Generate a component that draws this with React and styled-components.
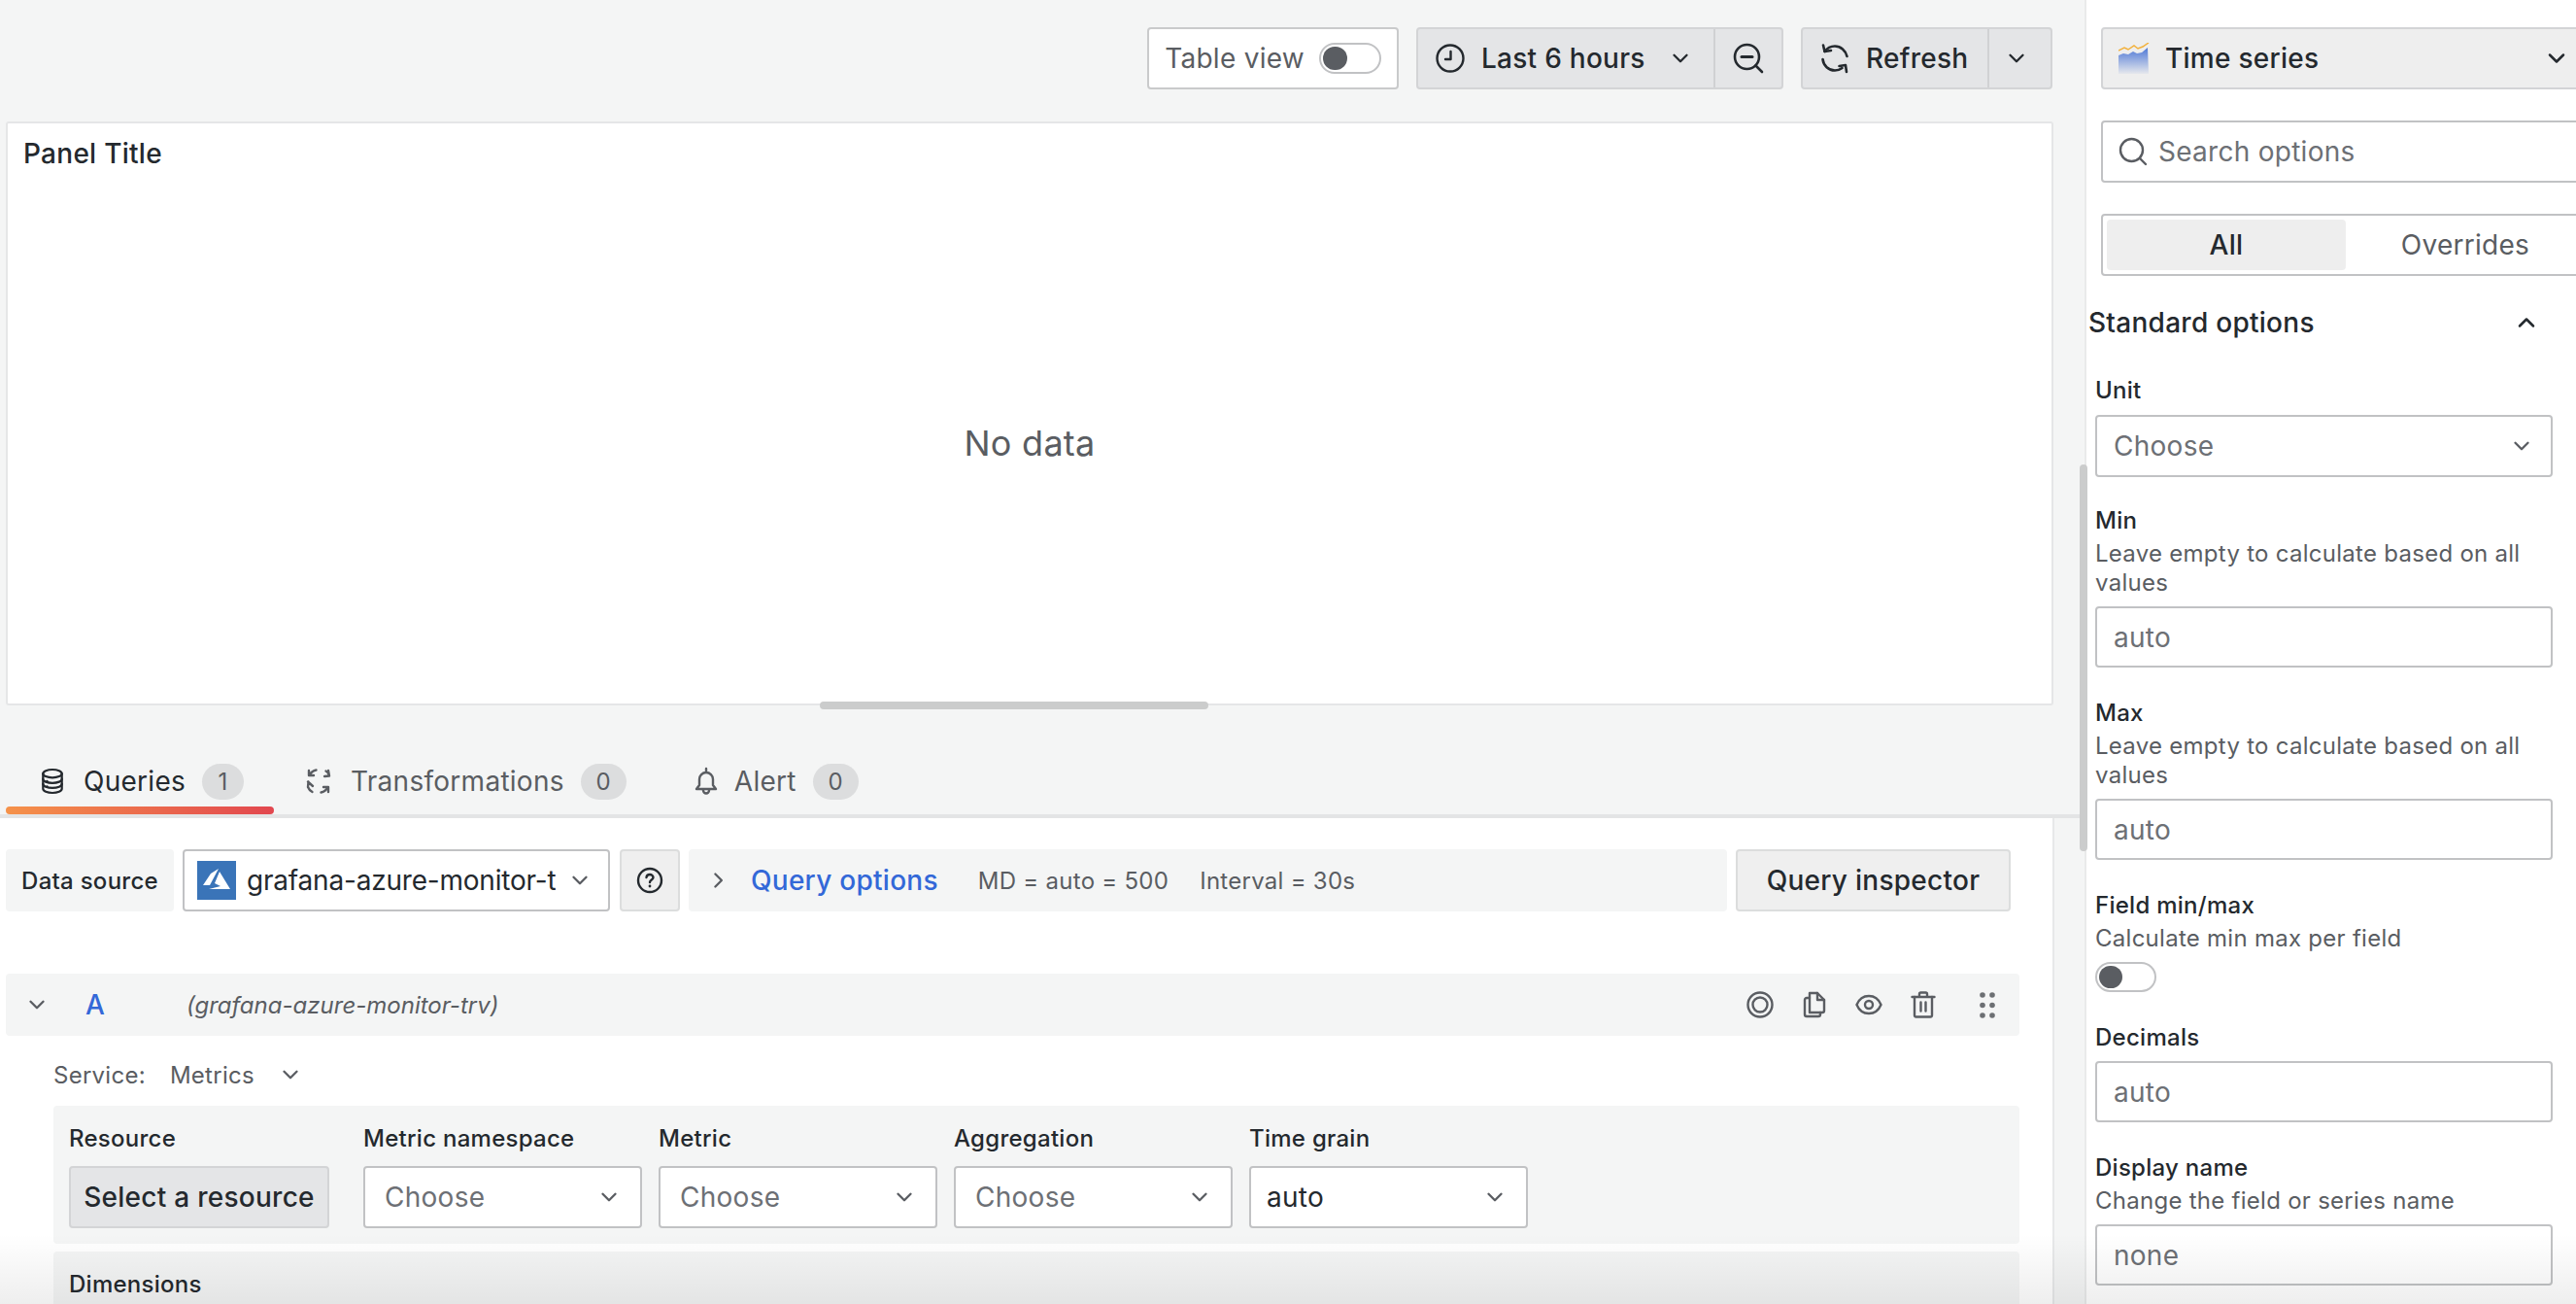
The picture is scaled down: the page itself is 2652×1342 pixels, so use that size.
import React from "react";
import styled, { createGlobalStyle } from "styled-components";

const GlobalStyle = createGlobalStyle`
  * { box-sizing: border-box; }
  html, body { margin: 0; padding: 0; height: 100%; overflow: hidden; }
  body {
    font-family: Inter, "Liberation Sans", sans-serif;
    letter-spacing: 0.27px;
    color: #24292e;
    background: #f4f5f5;
  }
`;

const Page = styled.div`
  position: relative;
  display: flex;
  width: 2652px;
  height: 1342px;
  overflow: hidden;
`;

const Main = styled.main`
  width: 2146px;
  flex: none;
  display: flex;
  flex-direction: column;
  background: #f4f5f5;
`;

const Toolbar = styled.div`
  display: flex;
  justify-content: flex-end;
  gap: 18px;
  height: 125px;
  padding: 28px 33px 0 0;
`;

const ToolbarBox = styled.div`
  display: flex;
  align-items: center;
  height: 64px;
  border: 2px solid #c9cacb;
  border-radius: 4px;
  background: #fff;
  font-size: 28px;
  color: #5a5d62;
  padding: 0 16px;
  gap: 15px;
`;

const Group = styled.div`
  display: flex;
  height: 64px;
  border: 2px solid #d3d4d6;
  border-radius: 4px;
  background: #e4e5e7;
  overflow: hidden;
`;

const GroupPart = styled.div`
  display: flex;
  align-items: center;
  width: ${(p) => p.$w}px;
  padding-left: ${(p) => p.$pl}px;
  font-size: 28px;
  font-weight: 500;
  color: #24292e;
  border-left: ${(p) => (p.$split ? "2px solid #d0d1d3" : "none")};
  svg { flex: none; }
`;

const RangeLabel = styled.span`
  margin: 0 23px 0 17px;
  white-space: nowrap;
`;

const RefreshLabel = styled.span`
  margin-left: 17px;
`;

const Switch = styled.div`
  position: relative;
  width: ${(p) => p.$w}px;
  height: ${(p) => p.$h}px;
  background: #fff;
  border: 2px solid #c1c2c4;
  border-radius: 999px;
  &::after {
    content: "";
    position: absolute;
    left: 2px;
    top: 2px;
    bottom: 2px;
    width: ${(p) => p.$knob}px;
    border-radius: 999px;
    background: #5a5d62;
  }
`;

const PanelFrame = styled.section`
  position: relative;
  height: 601px;
  margin: 0 32px 0 6px;
  background: #fff;
  border: 2px solid #e5e6e7;
  border-radius: 3px;
  flex: none;
`;

const PanelTitle = styled.div`
  position: absolute;
  left: 16px;
  top: 14px;
  font-size: 28px;
  line-height: 34px;
  font-weight: 500;
`;

const NoData = styled.div`
  display: flex;
  align-items: center;
  justify-content: center;
  height: 100%;
  padding: 64px 0 0 0;
  margin-top: -2px;
  font-size: 36px;
  color: #5a5d62;
`;

const ResizeBar = styled.div`
  position: absolute;
  left: 836px;
  bottom: -6px;
  width: 400px;
  height: 8px;
  border-radius: 4px;
  background: #cbcccc;
`;

const TabBar = styled.div`
  display: flex;
  align-items: flex-start;
  height: 116px;
  padding: 55px 0 0 6px;
  border-bottom: 4px solid #e3e4e5;
  flex: none;
`;

const Tab = styled.div`
  position: relative;
  display: flex;
  align-items: center;
  height: 46px;
  padding: 0 ${(p) => p.$pr}px 0 ${(p) => p.$pl}px;
  font-size: 28px;
  color: ${(p) => (p.$active ? "#24292e" : "#5a5d62")};
  svg { flex: none; margin-right: ${(p) => p.$iconGap}px; }
  ${(p) =>
    p.$active &&
    `&::after {
      content: "";
      position: absolute;
      left: 0;
      right: 0;
      top: 49px;
      height: 8px;
      border-radius: 4px;
      background: linear-gradient(90deg, #f5924a, #e2474f);
    }`}
`;

const Badge = styled.span`
  display: flex;
  align-items: center;
  justify-content: center;
  height: 37px;
  min-width: ${(p) => p.$w}px;
  margin-left: 17px;
  border-radius: 19px;
  background: #dcddde;
  font-size: 24px;
  color: #5a5d62;
`;

const Content = styled.div`
  flex: 1;
  background: #fff;
  border-right: 2px solid #e7e8e9;
  margin-right: 31px;
  padding: 32px 34px 0 6px;
  overflow: hidden;
`;

const SourceRow = styled.div`
  display: flex;
  height: 64px;
  margin-right: 9px;
`;

const SourceLabel = styled.div`
  display: flex;
  align-items: center;
  justify-content: center;
  width: 173px;
  background: #f4f5f5;
  border-radius: 4px;
  font-size: 24px;
  font-weight: 500;
  margin-right: 9px;
`;

const SourceSelect = styled.div`
  display: flex;
  align-items: center;
  width: 440px;
  margin-right: 10px;
  padding-left: 13px;
  background: #fff;
  border: 2px solid #c1c2c4;
  border-radius: 4px;
  font-size: 28px;
  svg { flex: none; }
`;

const SourceName = styled.span`
  width: 318px;
  margin: 0 12px 0 11px;
  overflow: hidden;
  white-space: nowrap;
  letter-spacing: -0.2px;
`;

const IconButton = styled.div`
  display: flex;
  align-items: center;
  justify-content: center;
  width: 62px;
  margin-right: 9px;
  background: #efefef;
  border: 2px solid #dcdddd;
  border-radius: 4px;
`;

const OptionsBar = styled.div`
  display: flex;
  align-items: center;
  flex: 1;
  background: #f4f5f5;
  border-radius: 4px;
  padding-left: 17px;
  margin-right: 9px;
  font-size: 24px;
  color: #5a5d62;
`;

const OptionsTitle = styled.span`
  margin: 0 41px 0 21px;
  font-size: 28px;
  font-weight: 500;
  color: #3368d8;
`;

const Interval = styled.span`
  margin-left: 32px;
`;

const InspectorButton = styled.div`
  display: flex;
  align-items: center;
  justify-content: center;
  width: 283px;
  background: #efefef;
  border: 2px solid #dcdddd;
  border-radius: 4px;
  font-size: 28px;
  font-weight: 500;
`;

const QueryHeader = styled.div`
  display: flex;
  align-items: center;
  height: 64px;
  margin-top: 64px;
  padding: 0 25px 0 19px;
  background: #f4f5f5;
  border-radius: 4px;
`;

const QueryLetter = styled.span`
  width: 104px;
  margin-left: 37px;
  font-size: 28px;
  font-weight: 500;
  color: #3368d8;
`;

const QuerySource = styled.span`
  flex: 1;
  font-size: 24px;
  font-style: italic;
  letter-spacing: 0;
  color: #5a5d62;
`;

const HeaderIcons = styled.div`
  display: flex;
  align-items: center;
  gap: 29px;
  color: #5a5d62;
`;

const Drag = styled.div`
  display: flex;
  margin-left: 16px;
  color: #6c6f73;
`;

const ServiceRow = styled.div`
  display: flex;
  align-items: center;
  height: 40px;
  margin: 20px 0 12px 49px;
  font-size: 24px;
  color: #5a5d62;
`;

const ServiceValue = styled.span`
  margin: 0 24px 0 25px;
`;

const EditorBox = styled.div`
  display: flex;
  gap: 17px;
  height: 142px;
  margin-left: 49px;
  padding: 17px 16px 0;
  background: #f4f5f5;
  border-radius: 4px;
`;

const EditorField = styled.div`
  display: flex;
  flex-direction: column;
  gap: 12px;
`;

const EditorLabel = styled.div`
  height: 33px;
  line-height: 33px;
  font-size: 24px;
  font-weight: 500;
`;

const ResourceButton = styled.div`
  display: flex;
  align-items: center;
  justify-content: center;
  width: 268px;
  height: 64px;
  margin-right: 18px;
  background: #e4e5e7;
  border: 2px solid #d3d4d6;
  border-radius: 4px;
  font-size: 28px;
  font-weight: 500;
`;

const Select = styled.div`
  display: flex;
  align-items: center;
  justify-content: space-between;
  width: ${(p) => p.$w || 287}px;
  height: 64px;
  margin-top: ${(p) => p.$mt || 0}px;
  padding: 0 ${(p) => p.$pr || 19}px 0 ${(p) => p.$pl || 20}px;
  background: #fff;
  border: 2px solid #c1c2c4;
  border-radius: 4px;
  font-size: 28px;
  color: ${(p) => (p.$filled ? "#24292e" : "#6d7075")};
`;

const DimensionsBox = styled.div`
  height: 100px;
  margin: 8px 0 0 49px;
  padding: 17px 16px;
  background: #f4f5f5;
  border-radius: 4px;
  font-size: 24px;
  font-weight: 500;
  line-height: 33px;
`;

const Sidebar = styled.aside`
  position: relative;
  flex: 1;
  min-width: 0;
  background: #fff;
  border-left: 2px solid #e9eaea;
  padding-top: 28px;
  overflow: hidden;
`;

const SideInset = styled.div`
  width: 504px;
  margin-left: 15px;
`;

const TypeSelect = styled.div`
  display: flex;
  align-items: center;
  height: 64px;
  padding: 0 19px 0 16px;
  background: #eeeeee;
  border: 2px solid #d3d4d6;
  border-radius: 4px;
  font-size: 28px;
  font-weight: 500;
`;

const TypeName = styled.span`
  flex: 1;
  margin-left: 16px;
`;

const SearchBox = styled.div`
  display: flex;
  align-items: center;
  gap: 11px;
  height: 64px;
  margin-top: 32px;
  padding-left: 16px;
  border: 2px solid #c1c2c4;
  border-radius: 4px;
  font-size: 28px;
  color: #6d7075;
`;

const TabsBox = styled.div`
  display: flex;
  height: 64px;
  margin-top: 32px;
  padding: 4px;
  border: 2px solid #c1c2c4;
  border-radius: 4px;
`;

const ModeTab = styled.div`
  display: flex;
  align-items: center;
  justify-content: center;
  width: 246px;
  border-radius: 4px;
  font-size: 28px;
  font-weight: ${(p) => (p.$active ? 500 : 400)};
  color: ${(p) => (p.$active ? "#24292e" : "#5a5d62")};
  background: ${(p) => (p.$active ? "#eeeeee" : "transparent")};
`;

const SectionHead = styled.div`
  display: flex;
  align-items: center;
  justify-content: space-between;
  width: 465px;
  height: 40px;
  margin: 28px 0 0 2px;
  font-size: 28px;
  font-weight: 500;
`;

const Options = styled.div`
  width: 471px;
  margin-left: 9px;
  padding-top: 35px;
`;

const Field = styled.div`
  margin-bottom: ${(p) => p.$mb}px;
`;

const FieldLabel = styled.div`
  height: 30px;
  line-height: 30px;
  font-size: 24px;
  font-weight: 500;
`;

const FieldHint = styled.div`
  margin-top: 4px;
  font-size: 24px;
  line-height: 30px;
  color: #5a5d62;
`;

const FieldInput = styled.div`
  display: flex;
  align-items: center;
  height: 63px;
  margin-top: ${(p) => p.$mt}px;
  padding-left: 17px;
  border: 2px solid #c1c2c4;
  border-radius: 4px;
  font-size: 28px;
  color: #6d7075;
`;

const FieldSwitch = styled(Switch)`
  margin-top: 9px;
`;

const ScrollThumb = styled.div`
  position: absolute;
  left: 2141px;
  top: 478px;
  width: 8px;
  height: 398px;
  border-radius: 4px;
  background: #cbcccc;
`;

const BottomFade = styled.div`
  position: absolute;
  left: 0;
  right: 0;
  bottom: 0;
  height: 72px;
  pointer-events: none;
  background: linear-gradient(180deg, rgba(0, 0, 0, 0), rgba(0, 0, 0, 0.065));
`;

const Chevron = ({ size = 26, up, right, color = "currentColor" }) => (
  <svg width={size} height={size} viewBox="0 0 20 20" fill="none" stroke={color} strokeWidth="1.8" strokeLinecap="round" strokeLinejoin="round">
    {up ? <path d="M5 12.5l5-5 5 5" /> : right ? <path d="M8 5l5 5-5 5" /> : <path d="M5 7.500l5 5 5-5" />}
  </svg>
);

const ClockIcon = () => (
  <svg width="30" height="30" viewBox="0 0 30 30" fill="none" stroke="#24292e" strokeWidth="2.4" strokeLinecap="round" strokeLinejoin="round">
    <circle cx="15" cy="15" r="13.5" />
    <path d="M15.5 8v8H10" />
  </svg>
);

const ZoomOutIcon = () => (
  <svg width="32" height="32" viewBox="0 0 32 32" fill="none" stroke="#24292e" strokeWidth="2.6" strokeLinecap="round">
    <circle cx="14.5" cy="14.5" r="12.5" />
    <path d="M9 14.5h11" strokeWidth="3" />
    <path d="M23.5 23.5L30 30" />
  </svg>
);

const SyncIcon = () => (
  <svg width="30" height="32" viewBox="0 0 30 32" fill="none" stroke="#24292e" strokeWidth="2.6" strokeLinecap="round" strokeLinejoin="round">
    <path d="M3 2.500L4.500 9l6.500-1" />
    <path d="M4.500 9C7 5.500 10.500 3.500 15 3.500c6 0 11 4.500 12.500 10.500" />
    <path d="M2.500 17c.8 6.500 6 11.500 12.500 11.500 3 0 5.500-1 7.500-2.500" />
    <path d="M27 30l-1-7-6.500 1" />
  </svg>
);

const SearchIcon = () => (
  <svg width="30" height="30" viewBox="0 0 30 30" fill="none" stroke="#5a5d62" strokeWidth="2.4" strokeLinecap="round">
    <circle cx="13.500" cy="13.500" r="11.500" />
    <path d="M22 22l6 6" />
  </svg>
);

const DatabaseIcon = () => (
  <svg width="24" height="30" viewBox="0 0 26 30" fill="none" stroke="#24292e" strokeWidth="2.400" strokeLinecap="round">
    <ellipse cx="13" cy="6.500" rx="10.500" ry="4.500" />
    <path d="M2.500 6.500v17c0 2.500 4.700 4.500 10.500 4.500s10.500-2 10.500-4.500v-17" />
    <path d="M2.500 12.500c0 2.500 4.700 4.500 10.500 4.500s10.500-2 10.500-4.500" />
    <path d="M2.500 18c0 2.500 4.700 4.500 10.500 4.500s10.500-2 10.500-4.500" />
    <path d="M7 15v.1M7 21v.1" strokeWidth="2.600" />
  </svg>
);

const ProcessIcon = () => (
  <svg width="28" height="28" viewBox="0 0 28 28" fill="none" stroke="#5a5d62" strokeWidth="2.400" strokeLinecap="round" strokeLinejoin="round">
    <path d="M4 3v5h5M4.500 8c1.500-3 3.500-5 7-5.500" />
    <path d="M24 3l1 5.500-5 .5M25 8.500c-.5-2-1.500-4-3.500-5" />
    <path d="M3 20l.5-5.500M3 14.500l5 4.500M3 20c1 2.500 2.500 4 4.500 5" />
    <path d="M24 25v-5h-5M23.500 20c-1.500 3-3.500 5-7 5.500" />
  </svg>
);

const BellIcon = () => (
  <svg width="26" height="30" viewBox="0 0 26 30" fill="none" stroke="#5a5d62" strokeWidth="2.400" strokeLinecap="round" strokeLinejoin="round">
    <path d="M13 2v3M6 13a7 7 0 0 1 14 0v6l3 4H3l3-4z" />
    <path d="M10 23.500v1a3 3 0 0 0 6 0v-1" />
  </svg>
);

const AzureLogo = () => (
  <svg width="40" height="40" viewBox="0 0 40 40">
    <rect width="40" height="40" fill="#3a74b8" />
    <path d="M22 8L14 13 6 25h7l9-17zM23 11l-5 12 6 3-12 3h22z" fill="#fff" />
  </svg>
);

const HelpIcon = () => (
  <svg width="28" height="28" viewBox="0 0 28 28" fill="none" stroke="#24292e" strokeWidth="2.400" strokeLinecap="round">
    <circle cx="14" cy="14" r="12" />
    <path d="M10.500 11c.2-2 1.700-3 3.500-3s3.500 1.200 3.500 3c0 2.500-3.500 2.500-3.500 5" />
    <path d="M14 20v.1" strokeWidth="2.800" />
  </svg>
);

const TargetIcon = () => (
  <svg width="28" height="28" viewBox="0 0 28 28" fill="none" stroke="currentColor" strokeWidth="2.400">
    <circle cx="14" cy="14" r="12.500" />
    <circle cx="14" cy="14" r="7.500" />
  </svg>
);

const CopyIcon = () => (
  <svg width="26" height="28" viewBox="0 0 26 28" fill="none" stroke="currentColor" strokeWidth="2.400" strokeLinejoin="round" strokeLinecap="round">
    <path d="M8 2h8l7 7v11a2 2 0 0 1-2 2H8z" />
    <path d="M16 2v7h7" />
    <path d="M8 7H5a2 2 0 0 0-2 2v15a2 2 0 0 0 2 2h12a2 2 0 0 0 2-2v-2" />
  </svg>
);

const EyeIcon = () => (
  <svg width="28" height="24" viewBox="0 0 28 24" fill="none" stroke="currentColor" strokeWidth="2.400">
    <path d="M1.500 12C4 6 9 3 14 3s10 3 12.500 9C24 18 19 21 14 21S4 18 1.500 12z" />
    <circle cx="14" cy="12" r="4" />
  </svg>
);

const TrashIcon = () => (
  <svg width="26" height="28" viewBox="0 0 26 28" fill="none" stroke="currentColor" strokeWidth="2.400" strokeLinecap="round" strokeLinejoin="round">
    <path d="M1.500 6h23M9 6V3a1.500 1.500 0 0 1 1.500-1.500h5A1.500 1.500 0 0 1 17 3v3" />
    <path d="M4 6v19a1.500 1.500 0 0 0 1.500 1.500h15A1.500 1.500 0 0 0 22 25V6" />
    <path d="M10.500 11.500v9M15.500 11.500v9" />
  </svg>
);

const GripIcon = () => (
  <svg width="16" height="27" viewBox="0 0 16 27" fill="currentColor">
    <circle cx="3" cy="3" r="2.800" />
    <circle cx="13" cy="3" r="2.800" />
    <circle cx="3" cy="13.500" r="2.800" />
    <circle cx="13" cy="13.500" r="2.800" />
    <circle cx="3" cy="24" r="2.800" />
    <circle cx="13" cy="24" r="2.800" />
  </svg>
);

const TimeSeriesIcon = () => (
  <svg width="32" height="32" viewBox="0 0 32 32" fill="none">
    <defs>
      <linearGradient id="tsFill" x1="0" y1="0" x2="0" y2="1">
        <stop offset="0" stopColor="#4e78d6" />
        <stop offset="1" stopColor="#4e78d6" stopOpacity="0.05" />
      </linearGradient>
    </defs>
    <path d="M0 13l5-2 5 1 5-3 4 2 5-1 6-5 1 27H0z" fill="url(#tsFill)" />
    <path d="M0 8l6-3 4 2 6-4 4 3 5-2 6-4" stroke="#f2b13c" strokeWidth="1.500" />
  </svg>
);

const Query = () => (
  <>
    <QueryHeader>
      <Chevron color="#5a5d62" />
      <QueryLetter>A</QueryLetter>
      <QuerySource>(grafana-azure-monitor-trv)</QuerySource>
      <HeaderIcons>
        <TargetIcon />
        <CopyIcon />
        <EyeIcon />
        <TrashIcon />
        <Drag>
          <GripIcon />
        </Drag>
      </HeaderIcons>
    </QueryHeader>
    <ServiceRow>
      Service:
      <ServiceValue>Metrics</ServiceValue>
      <Chevron color="#5a5d62" />
    </ServiceRow>
    <EditorBox>
      <EditorField>
        <EditorLabel>Resource</EditorLabel>
        <ResourceButton>Select a resource</ResourceButton>
      </EditorField>
      {["Metric namespace", "Metric", "Aggregation"].map((label) => (
        <EditorField key={label}>
          <EditorLabel>{label}</EditorLabel>
          <Select>
            Choose
            <Chevron color="#5a5d62" />
          </Select>
        </EditorField>
      ))}
      <EditorField>
        <EditorLabel>Time grain</EditorLabel>
        <Select $filled $pl={16}>
          auto
          <Chevron color="#5a5d62" />
        </Select>
      </EditorField>
    </EditorBox>
    <DimensionsBox>Dimensions</DimensionsBox>
  </>
);

const OptionsPane = () => (
  <Sidebar>
    <SideInset>
      <TypeSelect>
        <TimeSeriesIcon />
        <TypeName>Time series</TypeName>
        <Chevron size={28} />
      </TypeSelect>
      <SearchBox>
        <SearchIcon />
        Search options
      </SearchBox>
      <TabsBox>
        <ModeTab $active>All</ModeTab>
        <ModeTab>Overrides</ModeTab>
      </TabsBox>
    </SideInset>
    <SectionHead>
      Standard options
      <Chevron size={28} up />
    </SectionHead>
    <Options>
      <Field $mb={30}>
        <FieldLabel>Unit</FieldLabel>
        <Select $w={471} $mt={10} $pr={17} $pl={17}>
          Choose
          <Chevron color="#5a5d62" />
        </Select>
      </Field>
      <Field $mb={32}>
        <FieldLabel>Min</FieldLabel>
        <FieldHint>Leave empty to calculate based on all values</FieldHint>
        <FieldInput $mt={9}>auto</FieldInput>
      </Field>
      <Field $mb={32}>
        <FieldLabel>Max</FieldLabel>
        <FieldHint>Leave empty to calculate based on all values</FieldHint>
        <FieldInput $mt={9}>auto</FieldInput>
      </Field>
      <Field $mb={32}>
        <FieldLabel>Field min/max</FieldLabel>
        <FieldHint>Calculate min max per field</FieldHint>
        <FieldSwitch $w={63} $h={31} $knob={24} />
      </Field>
      <Field $mb={32}>
        <FieldLabel>Decimals</FieldLabel>
        <FieldInput $mt={9}>auto</FieldInput>
      </Field>
      <Field $mb={0}>
        <FieldLabel>Display name</FieldLabel>
        <FieldHint>Change the field or series name</FieldHint>
        <FieldInput $mt={9}>none</FieldInput>
      </Field>
    </Options>
  </Sidebar>
);

const App = () => {
  return (
    <Page>
      <GlobalStyle />
      <Main>
        <Toolbar>
          <ToolbarBox>
            Table view
            <Switch $w={64} $h={32} $knob={25} />
          </ToolbarBox>
          <Group>
            <GroupPart $w={304} $pl={18}>
              <ClockIcon />
              <RangeLabel>Last 6 hours</RangeLabel>
              <Chevron />
            </GroupPart>
            <GroupPart $split $w={70} $pl={18}>
              <ZoomOutIcon />
            </GroupPart>
          </Group>
          <Group>
            <GroupPart $w={190} $pl={18}>
              <SyncIcon />
              <RefreshLabel>Refresh</RefreshLabel>
            </GroupPart>
            <GroupPart $split $w={65} $pl={15}>
              <Chevron />
            </GroupPart>
          </Group>
        </Toolbar>
        <PanelFrame>
          <PanelTitle>Panel Title</PanelTitle>
          <NoData>No data</NoData>
          <ResizeBar />
        </PanelFrame>
        <TabBar>
          <Tab $active $pl={36} $pr={31} $iconGap={20}>
            <DatabaseIcon />
            Queries
            <Badge $w={43}>1</Badge>
          </Tab>
          <Tab $pl={32} $pr={0} $iconGap={19}>
            <ProcessIcon />
            Transformations
            <Badge $w={47}>0</Badge>
          </Tab>
          <Tab $pl={69} $pr={0} $iconGap={16}>
            <BellIcon />
            Alert
            <Badge $w={47}>0</Badge>
          </Tab>
        </TabBar>
        <Content>
          <SourceRow>
            <SourceLabel>Data source</SourceLabel>
            <SourceSelect>
              <AzureLogo />
              <SourceName>grafana-azure-monitor-trv</SourceName>
              <Chevron color="#5a5d62" />
            </SourceSelect>
            <IconButton>
              <HelpIcon />
            </IconButton>
            <OptionsBar>
              <Chevron right color="#5a5d62" />
              <OptionsTitle>Query options</OptionsTitle>
              MD = auto = 500
              <Interval>Interval = 30s</Interval>
            </OptionsBar>
            <InspectorButton>Query inspector</InspectorButton>
          </SourceRow>
          <Query />
        </Content>
      </Main>
      <OptionsPane />
      <ScrollThumb />
      <BottomFade />
    </Page>
  );
};

export default App;
